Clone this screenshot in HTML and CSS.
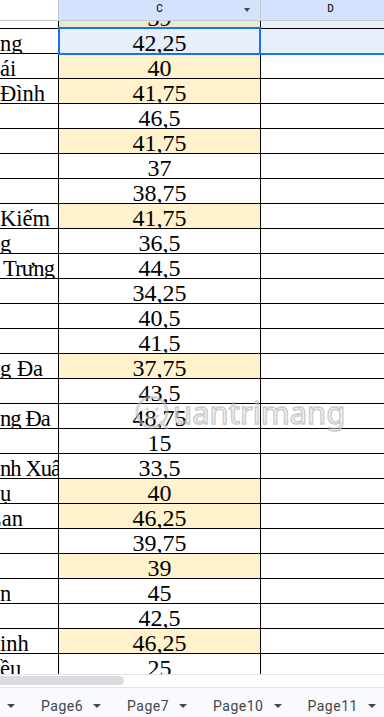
FILE: index.html
```html
<!DOCTYPE html>
<html>
<head>
<meta charset="utf-8">
<link rel="stylesheet" href="styles.css">
</head>
<body>
<div class="header">
  <div class="hb"></div>
  <div class="hc">C<span class="hdrop"></span></div>
  <div class="hd">D</div>
</div>
<div class="grid">
  <div class="rows">
    <div class="row"><div class="cb"></div><div class="cc tint">39</div><div class="cd seltint"></div></div>
    <div class="row sel"><div class="cb">ng</div><div class="cc seltint">42,25</div><div class="cd seltint"></div></div>
    <div class="row"><div class="cb">ái</div><div class="cc y">40</div><div class="cd"></div></div>
    <div class="row"><div class="cb">Đình</div><div class="cc y">41,75</div><div class="cd"></div></div>
    <div class="row"><div class="cb"></div><div class="cc">46,5</div><div class="cd"></div></div>
    <div class="row"><div class="cb"></div><div class="cc y">41,75</div><div class="cd"></div></div>
    <div class="row"><div class="cb"></div><div class="cc">37</div><div class="cd"></div></div>
    <div class="row"><div class="cb"></div><div class="cc">38,75</div><div class="cd"></div></div>
    <div class="row"><div class="cb">Kiếm</div><div class="cc y">41,75</div><div class="cd"></div></div>
    <div class="row"><div class="cb">g</div><div class="cc">36,5</div><div class="cd"></div></div>
    <div class="row"><div class="cb ind">Trưng</div><div class="cc">44,5</div><div class="cd"></div></div>
    <div class="row"><div class="cb"></div><div class="cc">34,25</div><div class="cd"></div></div>
    <div class="row"><div class="cb"></div><div class="cc">40,5</div><div class="cd"></div></div>
    <div class="row"><div class="cb"></div><div class="cc">41,5</div><div class="cd"></div></div>
    <div class="row"><div class="cb">g Đa</div><div class="cc y">37,75</div><div class="cd"></div></div>
    <div class="row"><div class="cb"></div><div class="cc">43,5</div><div class="cd"></div></div>
    <div class="row"><div class="cb tight">ng Đa</div><div class="cc">48,75</div><div class="cd"></div></div>
    <div class="row"><div class="cb"></div><div class="cc">15</div><div class="cd"></div></div>
    <div class="row"><div class="cb tight">nh Xuân</div><div class="cc">33,5</div><div class="cd"></div></div>
    <div class="row"><div class="cb">ụ</div><div class="cc y">40</div><div class="cd"></div></div>
    <div class="row"><div class="cb cut">Lan</div><div class="cc y">46,25</div><div class="cd"></div></div>
    <div class="row"><div class="cb"></div><div class="cc">39,75</div><div class="cd"></div></div>
    <div class="row"><div class="cb"></div><div class="cc y">39</div><div class="cd"></div></div>
    <div class="row"><div class="cb">n</div><div class="cc">45</div><div class="cd"></div></div>
    <div class="row"><div class="cb"></div><div class="cc">42,5</div><div class="cd"></div></div>
    <div class="row"><div class="cb">inh</div><div class="cc y">46,25</div><div class="cd"></div></div>
    <div class="row"><div class="cb">ều</div><div class="cc">25</div><div class="cd"></div></div>
  </div>
</div>
<div class="hscroll"><div class="thumb"></div></div>
<div class="tabbar">
  <div class="tabs">
    <div class="tab"><span class="tname">Page5</span><span class="tarrow"></span></div>
    <div class="tab"><span class="tname">Page6</span><span class="tarrow"></span></div>
    <div class="tab"><span class="tname">Page7</span><span class="tarrow"></span></div>
    <div class="tab"><span class="tname">Page10</span><span class="tarrow"></span></div>
    <div class="tab"><span class="tname">Page11</span><span class="tarrow"></span></div>
  </div>
</div>
<div class="watermark">
  <svg class="wq" width="36" height="36" viewBox="0 0 36 36">
    <circle cx="18" cy="18" r="15" fill="none" stroke="#bdbdbd" stroke-width="3"/>
    <circle cx="13" cy="15" r="1.8" fill="#bdbdbd"/>
    <circle cx="23" cy="15" r="1.8" fill="#bdbdbd"/>
    <path d="M11 21 Q18 28 25 21" fill="none" stroke="#bdbdbd" stroke-width="2.2"/>
    <path d="M27 28 L33 34" stroke="#bdbdbd" stroke-width="3" stroke-linecap="round"/>
  </svg>
  <span class="wtext">uantrimang</span>
</div>
</body>
</html>
```

FILE: styles.css
```css
html, body {
  margin: 0;
  padding: 0;
  background: #ffffff;
}
body {
  width: 384px;
  height: 717px;
  overflow: hidden;
  position: relative;
  font-family: "Liberation Serif", "Times New Roman", serif;
}

/* column header */
.header {
  display: flex;
  height: 20px;
  border-bottom: 1px solid #c7c7c7;
  overflow: hidden;
  font-family: Roboto, "Liberation Sans", sans-serif;
  font-size: 10px;
  font-weight: 500;
  color: #1f1f1f;
  line-height: 17px;
}
.hb {
  flex: none;
  width: 58px;
  border-right: 1px solid #c7c7c7;
  background: #ffffff;
}
.hc {
  flex: none;
  width: 201px;
  border-right: 1px solid #c7c7c7;
  background: #d3e3fd;
  text-align: center;
  position: relative;
}
.hd {
  flex: none;
  width: 139px;
  background: #d3e3fd;
  text-align: center;
}
.hdrop {
  position: absolute;
  right: 10px;
  top: 8px;
  width: 0;
  height: 0;
  border-left: 3.5px solid transparent;
  border-right: 3.5px solid transparent;
  border-top: 4px solid #444746;
}

/* grid */
.grid {
  height: 653px;
  overflow: hidden;
}
.rows {
  margin-top: -17px;
}
.row {
  display: flex;
  height: 24px;
  border-bottom: 1px solid #000000;
  position: relative;
  font-size: 24px;
  line-height: 29px;
  color: #000000;
}
.cb {
  flex: none;
  width: 58px;
  height: 24px;
  border-right: 1px solid #000000;
  overflow: hidden;
  white-space: nowrap;
  text-align: left;
  font-size: 22.5px;
}
.cb.ind {
  padding-left: 3px;
  width: 55px;
  letter-spacing: -0.8px;
}
.cb.tight {
  letter-spacing: -0.9px;
}
.cb.cut {
  text-indent: -12px;
}
.cc {
  flex: none;
  width: 201px;
  height: 24px;
  border-right: 1px solid #000000;
  text-align: center;
  overflow: hidden;
  white-space: nowrap;
}
.cd {
  flex: 1;
  height: 24px;
}
.y {
  background: #fff2cc;
}
.tint {
  background: #ece7d3;
}
.seltint {
  background: #e7effd;
}
.row.sel::before {
  content: "";
  position: absolute;
  left: 58px;
  top: -2px;
  width: 199px;
  height: 24px;
  border: 2px solid #1a73e8;
  z-index: 2;
}
.row.sel::after {
  content: "";
  position: absolute;
  left: 260px;
  right: 0;
  top: 24px;
  height: 2px;
  background: #1a73e8;
  z-index: 2;
}

/* horizontal scrollbar */
.hscroll {
  height: 12px;
  border-top: 1px solid #e3e3e3;
  border-bottom: 1px solid #e3e3e3;
  background: #ffffff;
}
.thumb {
  margin-top: 1px;
  margin-left: -10px;
  width: 134px;
  height: 9px;
  border-radius: 5px;
  background: #dadce0;
}

/* sheet tabs */
.tabbar {
  height: 40px;
  background: #f8fafd;
  overflow: hidden;
}
.tabs {
  display: flex;
  margin-left: -58px;
  padding-top: 10px;
}
.tab {
  flex: none;
  display: flex;
  align-items: center;
  gap: 10px;
  padding: 0 13px;
  height: 16px;
  font-family: Roboto, "Liberation Sans", sans-serif;
  font-size: 14px;
  letter-spacing: 0.5px;
  line-height: 16px;
  color: #444746;
}
.tarrow {
  width: 0;
  height: 0;
  border-left: 4px solid transparent;
  border-right: 4px solid transparent;
  border-top: 4px solid #444746;
}

/* watermark overlay */
.watermark {
  position: absolute;
  left: 134px;
  top: 394px;
  display: flex;
  align-items: center;
  gap: 3px;
  opacity: 0.6;
  pointer-events: none;
}
.wtext {
  font-family: "Noto Sans", sans-serif;
  font-size: 31px;
  line-height: 36px;
  color: #f4f4f4;
  -webkit-text-stroke: 1.4px #a8a8a8;
  letter-spacing: 0;
}
```
